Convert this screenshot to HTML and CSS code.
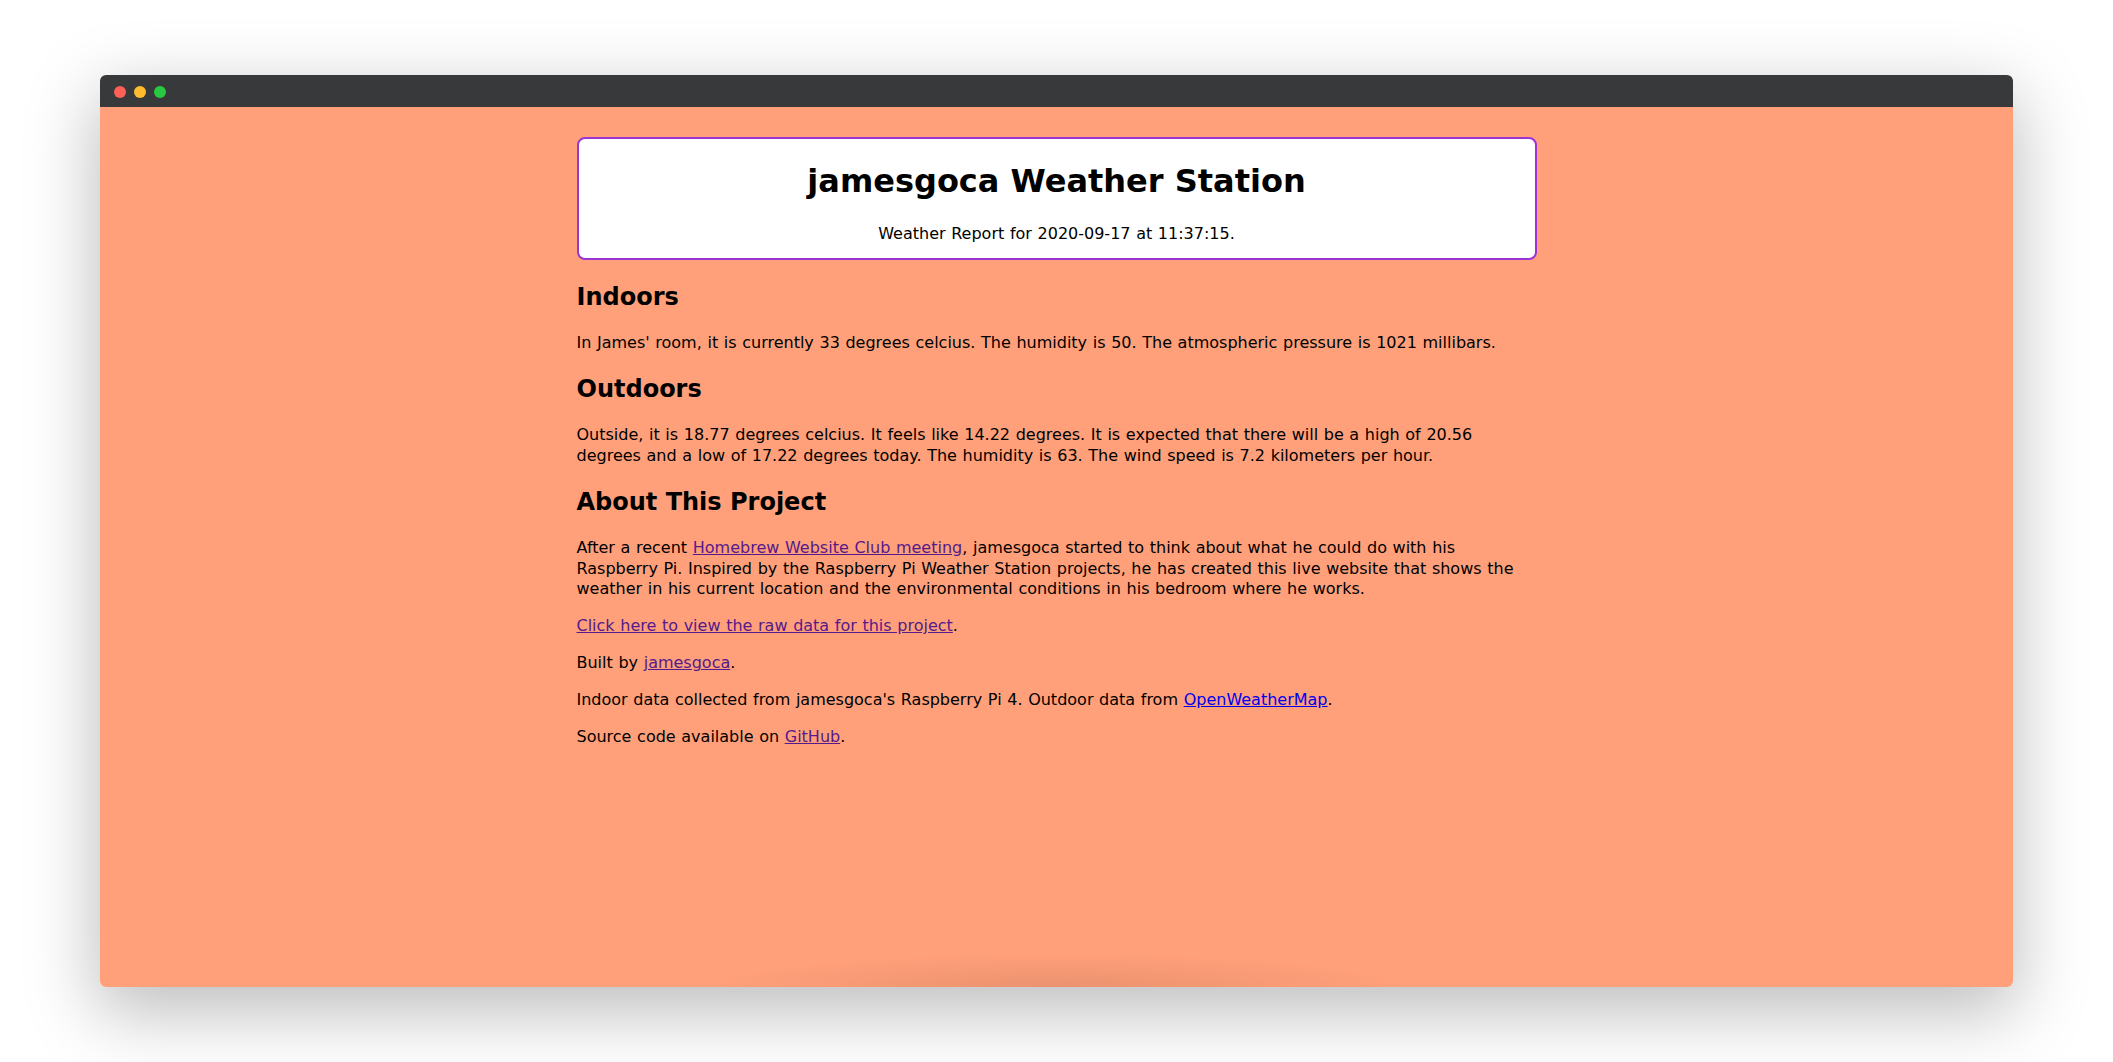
FILE: index.html
```html
<!DOCTYPE html>
<html lang="en">
<head>
<meta charset="utf-8">
<title>jamesgoca Weather Station</title>
<link rel="stylesheet" href="styles.css">
</head>
<body>
<div class="stage">
  <div class="window">
    <div class="titlebar">
      <span class="dot dot-red"></span>
      <span class="dot dot-yellow"></span>
      <span class="dot dot-green"></span>
    </div>
    <div class="viewport">
      <main class="page">
        <header class="masthead">
          <h1>jamesgoca Weather Station</h1>
          <p>Weather Report for 2020-09-17 at 11:37:15.</p>
        </header>

        <h2>Indoors</h2>
        <p>In James' room, it is currently 33 degrees celcius. The humidity is 50. The atmospheric pressure is 1021 millibars.</p>

        <h2>Outdoors</h2>
        <p>Outside, it is 18.77 degrees celcius. It feels like 14.22 degrees. It is expected that there will be a high of 20.56 degrees and a low of 17.22 degrees today. The humidity is 63. The wind speed is 7.2 kilometers per hour.</p>

        <h2>About This Project</h2>
        <p>After a recent <a class="visited" href="#">Homebrew Website Club meeting</a>, jamesgoca started to think about what he could do with his Raspberry Pi. Inspired by the Raspberry Pi Weather Station projects, he has created this live website that shows the weather in his current location and the environmental conditions in his bedroom where he works.</p>
        <p><a class="visited" href="#">Click here to view the raw data for this project</a>.</p>
        <p>Built by <a class="visited" href="#">jamesgoca</a>.</p>
        <p>Indoor data collected from jamesgoca's Raspberry Pi 4. Outdoor data from <a class="fresh" href="#">OpenWeatherMap</a>.</p>
        <p>Source code available on <a class="visited" href="#">GitHub</a>.</p>
      </main>
      <div class="bottom-shade"></div>
    </div>
  </div>
</div>
</body>
</html>
```
FILE: styles.css
```css
html, body {
  margin: 0;
  padding: 0;
  background: #ffffff;
}

.stage {
  box-sizing: border-box;
  width: 2113px;
  height: 1062px;
  padding: 75px 100px;
  display: flex;
}

.window {
  flex: 1;
  display: flex;
  flex-direction: column;
  border-radius: 6px;
  overflow: hidden;
  box-shadow: 0 22px 70px 4px rgba(0, 0, 0, 0.26);
}

.titlebar {
  height: 32px;
  flex: 0 0 32px;
  background: #38393b;
  display: flex;
  align-items: center;
  gap: 8px;
  padding-left: 14px;
  padding-top: 1px;
  box-sizing: border-box;
}

.dot {
  width: 12px;
  height: 12px;
  border-radius: 50%;
}

.dot-red { background: #fe5f57; }
.dot-yellow { background: #febc2e; }
.dot-green { background: #28c840; }

.viewport {
  flex: 1;
  position: relative;
  background: #ffa07a;
  overflow: hidden;
  font-family: "DejaVu Sans", Verdana, sans-serif;
  font-size: 16px;
  line-height: 1.3;
  word-spacing: 0.55px;
  color: #000000;
}

.page {
  width: 960px;
  margin: 0 auto;
  padding-top: 30px;
}

.masthead {
  background: #ffffff;
  border: 2px solid #9b34d3;
  border-radius: 8px;
  text-align: center;
  margin-bottom: 21.5px;
}

.masthead h1 {
  font-size: 32px;
  font-weight: bold;
  word-spacing: normal;
  margin: 22px 0 21px;
}

.masthead p {
  margin: 0 0 14px;
}

h2 {
  font-size: 24px;
  font-weight: bold;
  word-spacing: normal;
  margin: 20px 0 20px;
}

p {
  margin: 16px 0;
}

a.visited {
  color: #551a8b;
}

a.fresh {
  color: #0000ee;
}

.bottom-shade {
  position: absolute;
  left: 50%;
  bottom: 0;
  width: 700px;
  height: 34px;
  transform: translateX(-50%);
  background: radial-gradient(ellipse 50% 100% at 50% 100%, rgba(60, 20, 0, 0.1), rgba(60, 20, 0, 0) 100%);
}
```
